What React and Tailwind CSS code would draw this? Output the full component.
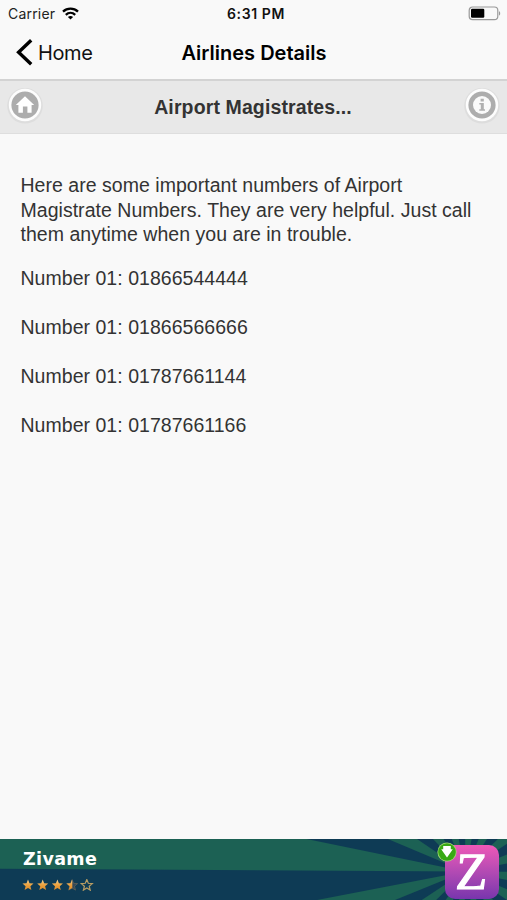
import React from 'react'

const numbers = ['01866544444', '01866566666', '01787661144', '01787661166']

const STAR = 'M6 .6 7.5 4.3 11.5 4.6 8.4 7.2 9.4 11.1 6 9 2.6 11.1 3.6 7.2 .5 4.6 4.5 4.3Z'

function StatusBar() {
  return (
    <div className="flex h-[27px] items-center pr-[6px] pl-2 text-[14px] text-[#222]">
      <div className="flex flex-1 items-center gap-[7px]">
        <span className="tracking-[0.2px]">Carrier</span>
        <svg width="17" height="13" viewBox="0 0 17 13" fill="none" stroke="#000" strokeWidth="2.3">
          <path d="M1 4.7C5.2.7 11.8.7 16 4.7" />
          <path d="M3.8 7.8c2.7-2.5 6.7-2.5 9.4 0" />
          <path d="M8.5 12.6 5.9 10c1.4-1.3 3.8-1.3 5.2 0z" fill="#000" stroke="none" />
        </svg>
      </div>
      <span className="relative left-[1.5px] text-[14px] font-semibold tracking-[0.6px] text-[#111]">6:31 PM</span>
      <div className="flex flex-1 justify-end">
        <svg width="33" height="15" viewBox="0 0 33 15">
          <rect x="1.2" y="1" width="28.6" height="12.6" rx="3.4" fill="none" stroke="#999" strokeWidth="1.2" />
          <rect x="3" y="2.8" width="13.3" height="9" rx="1.2" fill="#000" />
          <path d="M31 5.2c1.6.6 1.6 3.8 0 4.4z" fill="#999" />
        </svg>
      </div>
    </div>
  )
}

function NavBar() {
  return (
    <div className="flex h-[52px] items-center px-4 pb-[1px] text-[20px]">
      <div className="flex flex-1 items-center gap-[5px] text-[#111]">
        <svg width="17" height="27" viewBox="0 0 17 27" fill="none" stroke="#000" strokeWidth="3.4">
          <path d="M15.2 1.3 2.6 13.3 15.2 25.3" />
        </svg>
        <span className="tracking-[-0.4px]">Home</span>
      </div>
      <h1 className="relative left-[0.5px] font-semibold text-black">Airlines Details</h1>
      <div className="flex-1" />
    </div>
  )
}

function RoundIcon({ children }) {
  return (
    <svg className="mb-[2px]" width="38" height="38" viewBox="0 0 38 38">
      <circle cx="19" cy="19.8" r="17.8" fill="#ddd" />
      <circle cx="19" cy="19" r="16.2" fill="#fdfdfd" />
      <circle cx="19" cy="19" r="13.6" fill="#adadad" />
      {children}
    </svg>
  )
}

function SubHeader() {
  return (
    <div className="flex h-[55px] items-center justify-between border-t-2 border-b border-t-[#d3d3d3] border-b-[#dedede] bg-[#e8e8e8] px-[6px] pb-[2px]">
      <RoundIcon>
        <path d="M19 10.2 28.2 19h-2.6v7.8h-4.2v-6.2h-4.5v6.2h-4.5V19H9.8z" fill="#fff" />
      </RoundIcon>
      <h2 className="relative top-[2px] right-[0.5px] font-['Liberation_Sans',sans-serif] text-[19.5px] font-bold tracking-[0.12px] text-[#333]">
        Airport Magistrates...
      </h2>
      <RoundIcon>
        <circle cx="19" cy="19" r="9" fill="#fafafa" />
        <path d="M17.6 12.7h3.2v2.8h-3.2zM16.3 17h4.5v6.2H22v1.6h-5.7v-1.6h1.5v-4.6h-1.5z" fill="#b0b0b0" />
      </RoundIcon>
    </div>
  )
}

function Rays() {
  const cx = 465
  const cy = 32.5
  const step = Math.PI / 16
  const point = (a) => `${cx + 700 * Math.cos(a)},${cy + 700 * Math.sin(a)}`
  const wedges = Array.from({ length: 16 }, (_, i) => {
    const start = Math.PI + 0.006 + i * 2 * step
    return `${cx},${cy} ${point(start)} ${point(start + step)}`
  })
  return (
    <svg className="absolute inset-0" width="507" height="61" viewBox="0 0 507 61">
      {wedges.map((points) => (
        <polygon key={points} points={points} fill="#1c6154" />
      ))}
    </svg>
  )
}

function Stars() {
  return (
    <svg width="76" height="12" viewBox="0 0 76 12">
      <defs>
        <linearGradient id="gold" x1="0" y1="0" x2="0" y2="1">
          <stop offset="0" stopColor="#f4d59a" />
          <stop offset="0.5" stopColor="#eda23e" />
          <stop offset="1" stopColor="#d98b2b" />
        </linearGradient>
        <clipPath id="half">
          <rect width="6.2" height="12" />
        </clipPath>
      </defs>
      {[0, 14.7, 29.4].map((x) => (
        <path key={x} d={STAR} transform={`translate(${x})`} fill="url(#gold)" />
      ))}
      <g transform="translate(44.1)">
        <path d={STAR} fill="#33495a" stroke="#6a6654" strokeWidth="0.7" />
        <path d={STAR} fill="url(#gold)" clipPath="url(#half)" />
      </g>
      <path d={STAR} transform="translate(58.8)" fill="none" stroke="#b99d63" strokeWidth="1.2" />
    </svg>
  )
}

function AdBanner() {
  return (
    <div className="relative flex h-[61px] justify-between bg-[#0e3b55]">
      <Rays />
      <div className="relative pt-[9px] pl-[22px]">
        <div className="pl-[1px] font-['DejaVu_Sans',sans-serif] text-[17.5px] leading-[22px] font-bold tracking-[0.35px] text-white">Zivame</div>
        <div className="mt-[9px]">
          <Stars />
        </div>
      </div>
      <div className="relative mt-[6px] mr-[8px] flex h-[54px] w-[54px] items-center justify-center rounded-[10px] bg-gradient-to-b from-[#ef58b7] to-[#7935ad]">
        <span className="-skew-x-3 font-['Liberation_Serif',serif] text-[52px] leading-[52px] text-white [-webkit-text-stroke:1.2px_white]">Z</span>
        <svg className="absolute -top-[3px] -left-[8px]" width="20" height="20" viewBox="0 0 20 20">
          <circle cx="10" cy="10" r="9.6" fill="#a8d878" />
          <circle cx="10" cy="10" r="8.8" fill="#38a914" />
          <path d="M6.2 4h7.6v3.2h2L10 15.6 4.2 7.2h2z" fill="#fff" />
        </svg>
      </div>
    </div>
  )
}

export default function App() {
  return (
    <div className="flex h-[900px] w-[507px] flex-col overflow-hidden bg-[#f9f9f9] font-['Inter',sans-serif]">
      <StatusBar />
      <NavBar />
      <SubHeader />
      <main className="flex-1 pt-[39.4px] pr-[10px] pl-[20.5px] font-['Liberation_Sans',sans-serif] text-[19.5px] leading-[24.4px] tracking-[0.03px] text-[#333]">
        <p className="mb-[19.6px]">
          Here are some important numbers of Airport
          <br />
          Magistrate Numbers. They are very helpful. Just call
          <br />
          them anytime when you are in trouble.
        </p>
        <div className="space-y-[24.5px]">
          {numbers.map((n) => (
            <p key={n}>Number 01: {n}</p>
          ))}
        </div>
      </main>
      <AdBanner />
    </div>
  )
}
